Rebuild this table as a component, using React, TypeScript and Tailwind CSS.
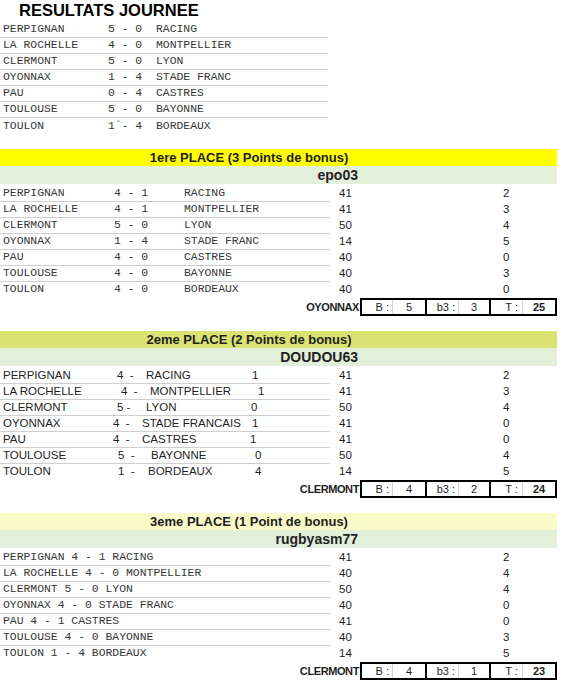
import React from 'react';

interface Footer {
  team: string;
  b: string;
  b3: string;
  t: string;
}

const sans = "font-['Liberation_Sans',Arial,sans-serif]";
const mono = "font-['Liberation_Mono','Courier_New',monospace] text-[#363636]";

const topResults = [
  ['PERPIGNAN', '5 - 0', 'RACING'],
  ['LA ROCHELLE', '4 - 0', 'MONTPELLIER'],
  ['CLERMONT', '5 - 0', 'LYON'],
  ['OYONNAX', '1 - 4', 'STADE FRANC'],
  ['PAU', '0 - 4', 'CASTRES'],
  ['TOULOUSE', '5 - 0', 'BAYONNE'],
  ['TOULON', '1´- 4', 'BORDEAUX'],
];

const epoRows = [
  ['PERPIGNAN', '4 - 1', 'RACING', '41', '2'],
  ['LA ROCHELLE', '4 - 1', 'MONTPELLIER', '41', '3'],
  ['CLERMONT', '5 - 0', 'LYON', '50', '4'],
  ['OYONNAX', '1 - 4', 'STADE FRANC', '14', '5'],
  ['PAU', '4 - 0', 'CASTRES', '40', '0'],
  ['TOULOUSE', '4 - 0', 'BAYONNE', '40', '3'],
  ['TOULON', '4 - 0', 'BORDEAUX', '40', '0'],
];

// second pronostic was typed with loose spacing, widths keep it as in the sheet
const doudouRows = [
  { team: 'PERPIGNAN', s: '4  -', opp: 'RACING', n: '1', pts: '41', bonus: '2', w: ['w-[117px]', 'w-[29px]', 'w-[106px]'] },
  { team: 'LA ROCHELLE', s: '4  -', opp: 'MONTPELLIER', n: '1', pts: '41', bonus: '3', w: ['w-[121px]', 'w-[29px]', 'w-[108px]'] },
  { team: 'CLERMONT', s: '5 -', opp: 'LYON', n: '0', pts: '50', bonus: '4', w: ['w-[117px]', 'w-[29px]', 'w-[105px]'] },
  { team: 'OYONNAX', s: '4  -', opp: 'STADE FRANCAIS', n: '1', pts: '41', bonus: '0', w: ['w-[113px]', 'w-[29px]', 'w-[110px]'] },
  { team: 'PAU', s: '4  -', opp: 'CASTRES', n: '1', pts: '41', bonus: '0', w: ['w-[113px]', 'w-[29px]', 'w-[108px]'] },
  { team: 'TOULOUSE', s: '5  -', opp: 'BAYONNE', n: '0', pts: '50', bonus: '4', w: ['w-[118px]', 'w-[33px]', 'w-[104px]'] },
  { team: 'TOULON', s: '1  -', opp: 'BORDEAUX', n: '4', pts: '14', bonus: '5', w: ['w-[118px]', 'w-[30px]', 'w-[107px]'] },
];

const rugbyRows = [
  ['PERPIGNAN 4 - 1 RACING', '41', '2'],
  ['LA ROCHELLE 4 - 0 MONTPELLIER', '40', '4'],
  ['CLERMONT 5 - 0 LYON', '50', '4'],
  ['OYONNAX 4 - 0 STADE FRANC', '40', '0'],
  ['PAU 4 - 1 CASTRES', '41', '0'],
  ['TOULOUSE 4 - 0 BAYONNE', '40', '3'],
  ['TOULON 1 - 4 BORDEAUX', '14', '5'],
];

const Row: React.FC<{ last: boolean; pts: string; bonus: string; children: React.ReactNode }> = ({
  last,
  pts,
  bonus,
  children,
}) => (
  <div className="flex h-[16px] items-center">
    <div className={`flex h-full w-[330px] items-center ${last ? '' : 'border-b border-[#cfcfcf]'}`}>{children}</div>
    <div className={`w-[173px] pl-[9px] text-[11.5px] ${sans}`}>{pts}</div>
    <div className={`text-[11.5px] ${sans}`}>{bonus}</div>
  </div>
);

const FooterBox: React.FC<{ f: Footer }> = ({ f }) => (
  <div className={`flex h-[18px] ${sans}`}>
    <div className="w-[360px] pr-[1px] text-right text-[11px] font-bold leading-[18px] tracking-[-0.4px]">{f.team}</div>
    <div className="flex h-[18px] w-[197px] border-2 border-black text-[11px] leading-[14px]">
      <div className="flex w-[63px]">
        <div className="w-[31px] border-r border-[#d4d4d4] pr-[3px] text-right">B :</div>
        <div className="flex-1 text-center">{f.b}</div>
      </div>
      <div className="flex w-[64px] border-l-2 border-black">
        <div className="w-[32px] border-r border-[#d4d4d4] pr-[3px] text-right">b3 :</div>
        <div className="flex-1 text-center">{f.b3}</div>
      </div>
      <div className="flex w-[66px] border-l-2 border-black">
        <div className="w-[32px] border-r border-[#d4d4d4] pr-[4px] text-right">T :</div>
        <div className="flex-1 text-center font-bold">{f.t}</div>
      </div>
    </div>
  </div>
);

const Section: React.FC<{ title: string; bar: string; player: string; footer: Footer; children: React.ReactNode }> = ({
  title,
  bar,
  player,
  footer,
  children,
}) => (
  <div className="w-[557px]">
    <div className={`flex h-[17px] ${bar}`}>
      <div className={`w-[498px] text-center text-[13px] font-bold leading-[17px] ${sans}`}>{title}</div>
    </div>
    <div className="flex h-[18px] bg-[#e2efda]">
      <div className={`w-[360px] pr-[2px] text-right text-[14px] font-bold leading-[18px] text-[#1f1f1f] ${sans}`}>{player}</div>
    </div>
    <div className="mt-[2px]">{children}</div>
    <FooterBox f={footer} />
  </div>
);

export default function App() {
  return (
    <div className="h-[685px] w-[564px] overflow-hidden bg-white text-[#1e1e1e]">
      <div className={`h-[22px] pl-[19px] text-[16.5px] font-bold leading-[20px] text-black ${sans}`}>RESULTATS JOURNEE</div>

      <div className={`w-[328px] text-[11.4px] ${mono}`}>
        {topResults.map(([home, score, away], i) => (
          <div
            key={home}
            className={`flex h-[16px] items-center pt-[1px] ${i < topResults.length - 1 ? 'border-b border-[#cfcfcf]' : ''}`}
          >
            <span className="w-[108px] pl-[3px]">{home}</span>
            <span className="w-[48px] whitespace-pre">{score}</span>
            <span>{away}</span>
          </div>
        ))}
      </div>

      <div className="mt-[15px] flex flex-col gap-[15px]">
        <Section
          title="1ere PLACE (3 Points de bonus)"
          bar="bg-[#ffff00]"
          player="epo03"
          footer={{ team: 'OYONNAX', b: '5', b3: '3', t: '25' }}
        >
          {epoRows.map(([home, score, away, pts, bonus], i) => (
            <Row key={home} last={i === epoRows.length - 1} pts={pts} bonus={bonus}>
              <div className={`flex text-[11.4px] ${mono}`}>
                <span className="w-[114px] pl-[3px]">{home}</span>
                <span className="w-[70px] whitespace-pre">{score}</span>
                <span>{away}</span>
              </div>
            </Row>
          ))}
        </Section>

        <Section
          title="2eme PLACE (2 Points de bonus)"
          bar="bg-[#dbe271]"
          player="DOUDOU63"
          footer={{ team: 'CLERMONT', b: '4', b3: '2', t: '24' }}
        >
          {doudouRows.map((r, i) => (
            <Row key={r.team} last={i === doudouRows.length - 1} pts={r.pts} bonus={r.bonus}>
              <div className={`flex text-[11.5px] ${sans}`}>
                <span className={`${r.w[0]} pl-[3px]`}>{r.team}</span>
                <span className={`${r.w[1]} whitespace-pre`}>{r.s}</span>
                <span className={r.w[2]}>{r.opp}</span>
                <span>{r.n}</span>
              </div>
            </Row>
          ))}
        </Section>

        <Section
          title="3eme PLACE (1 Point de bonus)"
          bar="bg-[#fbfbc9]"
          player="rugbyasm77"
          footer={{ team: 'CLERMONT', b: '4', b3: '1', t: '23' }}
        >
          {rugbyRows.map(([line, pts, bonus], i) => (
            <Row key={line} last={i === rugbyRows.length - 1} pts={pts} bonus={bonus}>
              <span className={`pl-[3px] text-[11.4px] ${mono}`}>{line}</span>
            </Row>
          ))}
        </Section>
      </div>
    </div>
  );
}
